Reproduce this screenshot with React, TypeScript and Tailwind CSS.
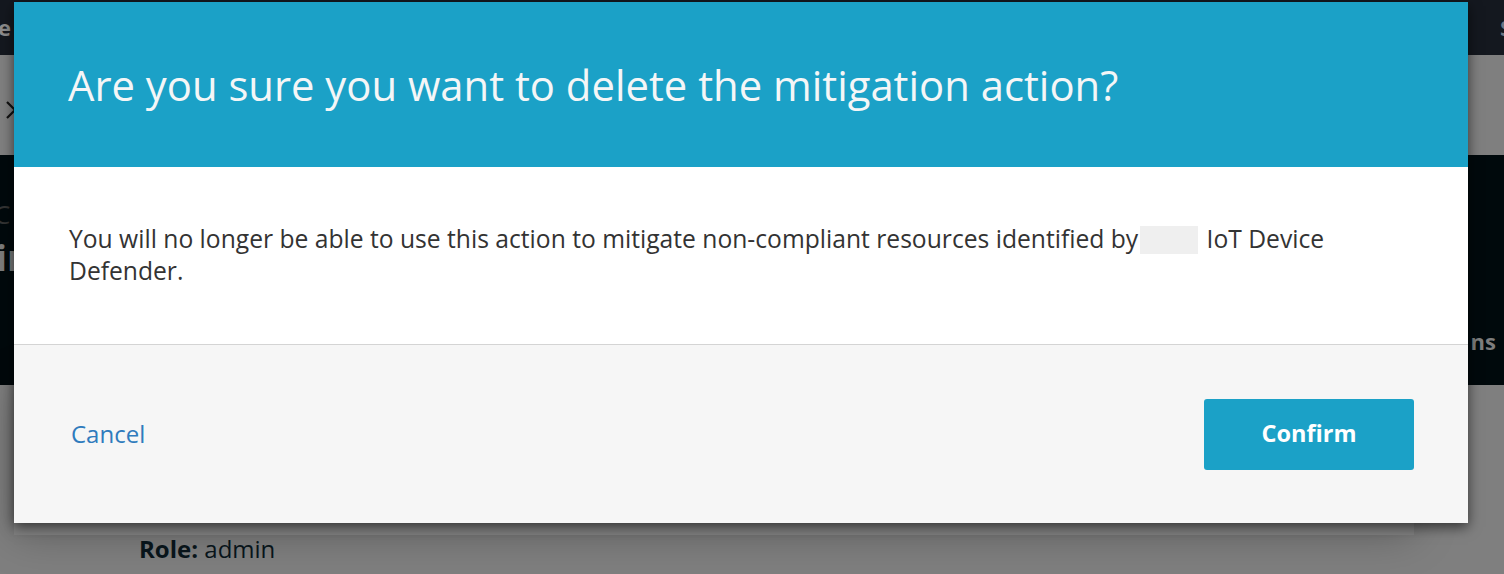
import React from "react";

export default function App() {
  const font = { fontFamily: '"Open Sans", "Noto Sans", Arial, sans-serif' };
  return (
    <div className="relative h-[574px] w-[1504px] overflow-hidden bg-[#7f7f7f]" style={font}>
      {/* dimmed page underneath */}
      <div className="flex flex-col">
        <div className="flex h-[55px] items-center justify-between bg-[#14181f] text-[22px] font-bold text-[#8c8c8c]">
          <span className="-ml-[2px]">e</span>
          <span className="-mr-[8px] text-[#6b7684]">S</span>
        </div>
        <div className="flex h-[100px] items-center bg-[#7f7f7f] pl-[5px]">
          <svg width="12" height="20" viewBox="0 0 12 20" className="mt-[10px]">
            <path d="M2 2 L10 10 L2 18" fill="none" stroke="#111" strokeWidth="2.2" />
          </svg>
        </div>
        <div className="relative flex h-[230px] flex-col bg-[#00090c]">
          <span className="mt-[40px] -ml-[6px] text-[26px] text-[#333]">C</span>
          <span className="mt-[6px] -ml-[4px] text-[36px] font-bold leading-none text-[#7a7a7a]">in</span>
          <span className="absolute right-[8px] top-[170px] text-[22px] font-bold text-[#7d7d7d]">ns</span>
        </div>
        <div className="relative h-[189px] bg-[#7f7f7f]">
          <div className="absolute left-[14px] top-[0px] h-[150px] w-[1400px] bg-[#7f7f7f] shadow-[0_0_40px_rgba(0,0,0,0.25)]" />
          <div className="relative pl-[139px] pt-[146px] text-[24px] text-[#08141a]">
            <span className="font-bold">Role:</span> admin
          </div>
        </div>
      </div>

      {/* modal */}
      <div className="absolute left-[14px] top-[2px] flex w-[1454px] flex-col shadow-[0_4px_12px_rgba(0,0,0,0.6)]">
        <div className="flex h-[165px] items-center bg-[#1ba1c7] pl-[54px]">
          <h1 className="text-[41.8px] font-normal leading-none text-[#f4f6f7]">
            Are you sure you want to delete the mitigation action?
          </h1>
        </div>
        <div className="h-[178px] border-b border-[#d4d4d4] bg-white pl-[55px] pr-[110px] pt-[56px]">
          <p className="text-[24.65px] leading-[32px] text-[#333]">
            You will no longer be able to use this action to mitigate non-compliant resources identified by
            <span className="mx-[2px] inline-block h-[28px] w-[58px] align-[-6px] bg-[#efefef]" /> IoT Device Defender.
          </p>
        </div>
        <div className="flex h-[178px] items-center justify-between bg-[#f6f6f6] pl-[57px] pr-[54px]">
          <button className="text-[24px] text-[#2f7bbd]">Cancel</button>
          <button className="flex h-[71px] w-[210px] items-center justify-center rounded-[3px] bg-[#1ba1c7] text-[23.5px] font-bold text-white">
            Confirm
          </button>
        </div>
      </div>
    </div>
  );
}
